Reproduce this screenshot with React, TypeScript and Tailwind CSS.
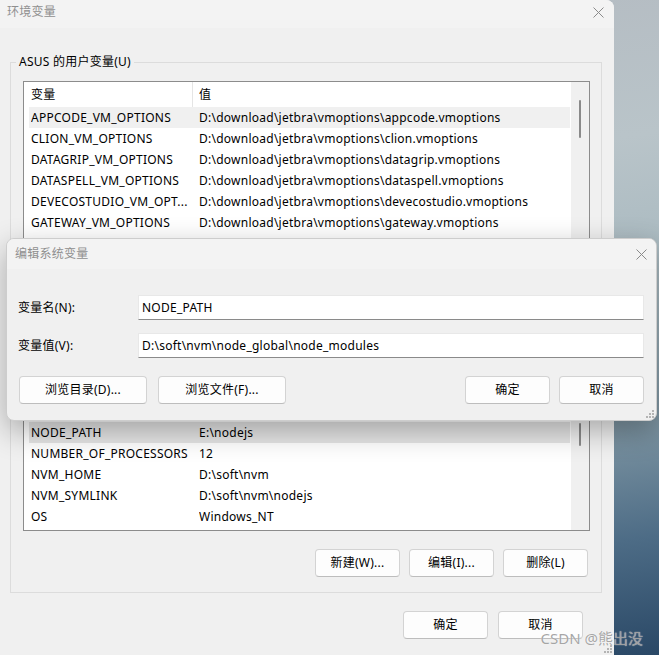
import React from "react";

const userRows: [string, string][] = [
  ["APPCODE_VM_OPTIONS", "D:\\download\\jetbra\\vmoptions\\appcode.vmoptions"],
  ["CLION_VM_OPTIONS", "D:\\download\\jetbra\\vmoptions\\clion.vmoptions"],
  ["DATAGRIP_VM_OPTIONS", "D:\\download\\jetbra\\vmoptions\\datagrip.vmoptions"],
  ["DATASPELL_VM_OPTIONS", "D:\\download\\jetbra\\vmoptions\\dataspell.vmoptions"],
  ["DEVECOSTUDIO_VM_OPT...", "D:\\download\\jetbra\\vmoptions\\devecostudio.vmoptions"],
  ["GATEWAY_VM_OPTIONS", "D:\\download\\jetbra\\vmoptions\\gateway.vmoptions"],
  ["GOLAND_VM_OPTIONS", "D:\\download\\jetbra\\vmoptions\\goland.vmoptions"],
  ["IDEA_VM_OPTIONS", "D:\\download\\jetbra\\vmoptions\\idea.vmoptions"],
  ["JETBRAINSCLIENT_VM_...", "D:\\download\\jetbra\\vmoptions\\jetbrainsclient.vmoptions"],
  ["JETBRAINS_CLIENT_V...", "D:\\download\\jetbra\\vmoptions\\jetbrains_client.vmoptions"],
  ["PHPSTORM_VM_OPTIONS", "D:\\download\\jetbra\\vmoptions\\phpstorm.vmoptions"],
  ["PYCHARM_VM_OPTIONS", "D:\\download\\jetbra\\vmoptions\\pycharm.vmoptions"],
  ["RIDER_VM_OPTIONS", "D:\\download\\jetbra\\vmoptions\\rider.vmoptions"],
  ["RUBYMINE_VM_OPTIONS", "D:\\download\\jetbra\\vmoptions\\rubymine.vmoptions"],
  ["WEBSTORM_VM_OPTIONS", "D:\\download\\jetbra\\vmoptions\\webstorm.vmoptions"],
  ["NODE_PATH", "E:\\nodejs"],
  ["NUMBER_OF_PROCESSORS", "12"],
  ["NVM_HOME", "D:\\soft\\nvm"],
  ["NVM_SYMLINK", "D:\\soft\\nvm\\nodejs"],
  ["OS", "Windows_NT"],
];

function CloseIcon() {
  return (
    <svg width="11" height="11" viewBox="0 0 11 11" className="shrink-0">
      <path d="M0.5 0.5L10.5 10.5M10.5 0.5L0.5 10.5" stroke="#8a8a8a" strokeWidth="1" />
    </svg>
  );
}

function Grip() {
  const dots = [
    [6, 0],
    [3, 3],
    [6, 3],
    [0, 6],
    [3, 6],
    [6, 6],
  ];
  return (
    <svg width="8" height="8" viewBox="0 0 8 8">
      {dots.map(([x, y]) => (
        <rect key={`${x}-${y}`} x={x} y={y} width="2" height="2" fill="#b4b4b4" />
      ))}
    </svg>
  );
}

function Btn({ label, w }: { label: string; w: string }) {
  return (
    <button
      type="button"
      className={`${w} h-[28px] rounded-[4px] border border-[#d3d3d3] border-b-[#bdbdbd] bg-[#fdfdfd] text-[12px] text-black`}
    >
      {label}
    </button>
  );
}

function EditDialog() {
  return (
    <div className="absolute left-[6px] top-[238px] flex h-[183px] w-[651px] flex-col overflow-hidden rounded-[8px] border border-[#cdcdcd] bg-[#f0f0f0] shadow-[0_10px_30px_rgba(0,0,0,0.3)]">
      <div className="flex h-[30px] shrink-0 items-center justify-between bg-[#f3f3f3] pl-[8px] pr-[9px]">
        <span className="text-[12px] text-[#8f8f8f]">编辑系统变量</span>
        <CloseIcon />
      </div>
      <div className="grid grid-cols-[120px_1fr] items-center gap-y-[13px] pl-[11px] pr-[12px] pt-[26px]">
        <span className="text-[12px]">变量名(N):</span>
        <div className="flex h-[25px] items-center border border-[#e8e8e8] border-b-[#8a8a8a] bg-white pl-[3px] text-[12px]">
          NODE_PATH
        </div>
        <span className="text-[12px]">变量值(V):</span>
        <div className="flex h-[25px] items-center border border-[#e8e8e8] border-b-[#8a8a8a] bg-white pl-[3px] text-[12px]">
          D:\soft\nvm\node_global\node_modules
        </div>
      </div>
      <div className="mt-[18px] flex items-center justify-between pl-[12px] pr-[12px]">
        <div className="flex gap-[11px]">
          <Btn label="浏览目录(D)..." w="w-[128px]" />
          <Btn label="浏览文件(F)..." w="w-[128px]" />
        </div>
        <div className="flex gap-[9px]">
          <Btn label="确定" w="w-[85px]" />
          <Btn label="取消" w="w-[85px]" />
        </div>
      </div>
      <div className="absolute bottom-[2px] right-[2px]">
        <Grip />
      </div>
    </div>
  );
}

export default function App() {
  return (
    <div className="relative flex h-[655px] w-[659px] overflow-hidden bg-[linear-gradient(172deg,#b3b9c0_0%,#b9c4c9_30%,#a7b8bf_50%,#7f96a3_68%,#4d6c86_84%,#2a4866_100%)] tracking-[0.25px] text-black [font-family:'Noto_Sans','Noto_Sans_CJK_SC',sans-serif]">
      <div className="relative flex h-full w-[614px] shrink-0 flex-col rounded-tr-[8px] bg-[#f0f0f0]">
        <div className="flex h-[28px] shrink-0 items-start justify-between rounded-tr-[8px] bg-[#f3f3f3] pl-[7px] pr-[10px]">
          <span className="pt-[4px] text-[12px] leading-[16px] text-[#8f8f8f]">环境变量</span>
          <div className="pt-[7px]">
            <CloseIcon />
          </div>
        </div>

        <fieldset className="ml-[10px] mt-[26px] w-[592px] border border-[#dcdcdc] pb-[15px] pl-[12px] pr-[11px] pt-[11px]">
          <legend className="-ml-[7px] px-[3px] text-[12px] leading-[16px]">ASUS 的用户变量(U)</legend>
          <div className="flex h-[450px] border border-[#8c8c8c] bg-white">
            <div className="flex min-w-0 flex-1 flex-col text-[12px]">
              <div className="flex h-[25px] shrink-0 items-center">
                <div className="flex h-full w-[169px] items-center border-r border-[#e5e5e5] pl-[7px]">变量</div>
                <div className="pl-[6px]">值</div>
              </div>
              {userRows.map(([k, v], i) => (
                <div
                  key={k}
                  className={`ml-[5px] mr-[1px] flex h-[21px] shrink-0 items-center whitespace-nowrap pl-[2px] ${
                    i === 0 ? "bg-[#f0f0f0]" : i === 15 ? "bg-[#e6e6e6]" : ""
                  }`}
                >
                  <span className="w-[168px] shrink-0 overflow-hidden">{k}</span>
                  <span className="overflow-hidden">{v}</span>
                </div>
              ))}
            </div>
            <div className="flex w-[18px] shrink-0 flex-col items-center bg-[#f0f0f0]">
              <div className="mt-[18px] h-[38px] w-[2px] rounded-full bg-[#8a8a8a]" />
              <div className="mt-[285px] h-[23px] w-[2px] rounded-full bg-[#8a8a8a]" />
            </div>
          </div>
          <div className="mt-[18px] flex justify-end gap-[9px] pr-[2px]">
            <Btn label="新建(W)..." w="w-[85px]" />
            <Btn label="编辑(I)..." w="w-[85px]" />
            <Btn label="删除(L)" w="w-[85px]" />
          </div>
        </fieldset>

        <div className="mt-[18px] flex justify-end gap-[10px] pr-[31px]">
          <Btn label="确定" w="w-[85px]" />
          <Btn label="取消" w="w-[85px]" />
        </div>

        <div className="absolute bottom-[2px] right-[2px]">
          <Grip />
        </div>
      </div>

      <EditDialog />

      <div className="absolute right-[16px] top-[627px] text-[15px] tracking-normal text-[rgba(150,150,150,0.85)] [text-shadow:0_0_1px_rgba(255,255,255,0.9)]">
        CSDN @熊出没
      </div>
    </div>
  );
}
